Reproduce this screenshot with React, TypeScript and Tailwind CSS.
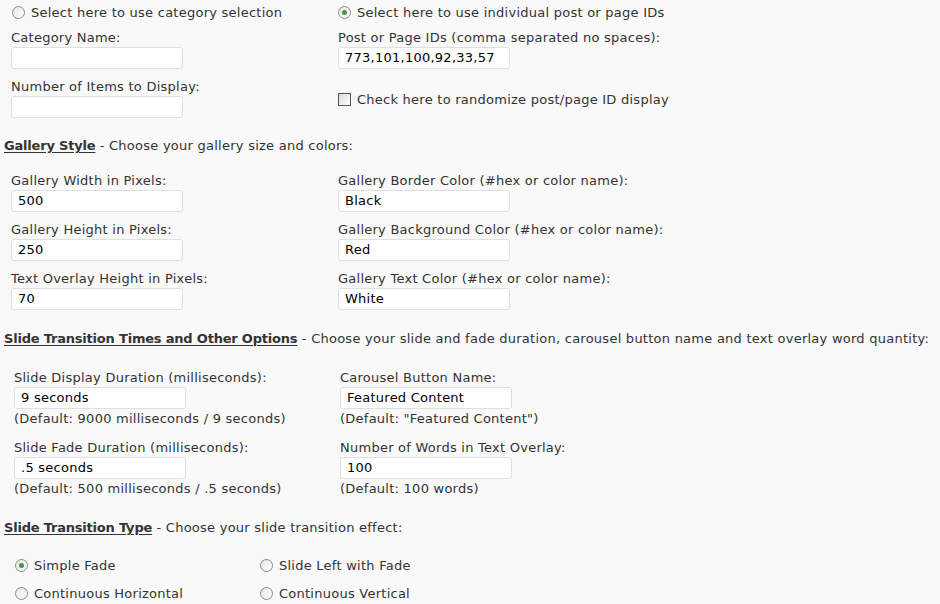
import React from "react";

const font = { fontFamily: '"DejaVu Sans", Verdana, sans-serif', letterSpacing: "0.25px" };

function Radio({ checked }: { checked?: boolean }) {
  return (
    <span className="inline-flex items-center justify-center w-[13px] h-[13px] rounded-full border border-[#8a8a8a] bg-gradient-to-br from-[#e6e6e6] to-[#ffffff] shrink-0">
      {checked && <span className="w-[5px] h-[5px] rounded-full bg-[#3c9a3c]" />}
    </span>
  );
}

function Checkbox() {
  return (
    <span className="inline-block w-[13px] h-[13px] border border-[#555] bg-gradient-to-br from-[#dcdcdc] to-[#ffffff] shrink-0" />
  );
}

function Input({ value }: { value?: string }) {
  return (
    <div className="w-[172px] h-[22px] bg-white border border-[#dfdfdf] rounded-[3px] px-[6px] leading-[20px] text-[#000]">
      {value}
    </div>
  );
}

function Field({ label, value, note }: { label: string; value?: string; note?: string }) {
  return (
    <div className="flex flex-col">
      <div className="h-[17px] leading-[17px] whitespace-nowrap">{label}</div>
      <div className="mt-[1px]">
        <Input value={value} />
      </div>
      {note && <div className="h-[20px] leading-[20px] whitespace-nowrap">{note}</div>}
    </div>
  );
}

function Heading({ title, desc }: { title: string; desc: string }) {
  return (
    <div className="h-[17px] leading-[17px] pl-[4px] whitespace-nowrap">
      <span className="font-bold underline underline-offset-[2px] tracking-[-0.2px]">{title}</span>
      <span> - {desc}</span>
    </div>
  );
}

export default function App() {
  return (
    <div
      className="w-[940px] h-[604px] overflow-hidden bg-[#f9f9f9] text-[#333] text-[13px]"
      style={font}
    >
      {/* Top section */}
      <div className="grid grid-cols-[327px_1fr] pl-[11px] pt-[4px]">
        <div className="flex flex-col">
          <div className="flex items-center gap-[6px] h-[17px] pl-[1px]">
            <Radio />
            <span>Select here to use category selection</span>
          </div>
          <div className="mt-[8px]">
            <Field label="Category Name:" />
          </div>
          <div className="mt-[9px]">
            <Field label="Number of Items to Display:" />
          </div>
        </div>
        <div className="flex flex-col">
          <div className="flex items-center gap-[6px] h-[17px]">
            <Radio checked />
            <span>Select here to use individual post or page IDs</span>
          </div>
          <div className="mt-[8px]">
            <Field label="Post or Page IDs (comma separated no spaces):" value="773,101,100,92,33,57" />
          </div>
          <div className="mt-[22px] flex items-center gap-[6px] h-[17px]">
            <Checkbox />
            <span>Check here to randomize post/page ID display</span>
          </div>
        </div>
      </div>

      <div className="mt-[19px]">
        <Heading title="Gallery Style" desc="Choose your gallery size and colors:" />
      </div>

      <div className="grid grid-cols-[327px_1fr] pl-[11px] mt-[18px]">
        <div className="flex flex-col gap-[9px]">
          <Field label="Gallery Width in Pixels:" value="500" />
          <Field label="Gallery Height in Pixels:" value="250" />
          <Field label="Text Overlay Height in Pixels:" value="70" />
        </div>
        <div className="flex flex-col gap-[9px]">
          <Field label="Gallery Border Color (#hex or color name):" value="Black" />
          <Field label="Gallery Background Color (#hex or color name):" value="Red" />
          <Field label="Gallery Text Color (#hex or color name):" value="White" />
        </div>
      </div>

      <div className="mt-[20px]">
        <Heading
          title="Slide Transition Times and Other Options"
          desc="Choose your slide and fade duration, carousel button name and text overlay word quantity:"
        />
      </div>

      <div className="grid grid-cols-[326px_1fr] pl-[14px] mt-[22px]">
        <div className="flex flex-col gap-[10px]">
          <Field
            label="Slide Display Duration (milliseconds):"
            value="9 seconds"
            note="(Default: 9000 milliseconds / 9 seconds)"
          />
          <Field
            label="Slide Fade Duration (milliseconds):"
            value=".5 seconds"
            note="(Default: 500 milliseconds / .5 seconds)"
          />
        </div>
        <div className="flex flex-col gap-[10px]">
          <Field label="Carousel Button Name:" value="Featured Content" note={'(Default: "Featured Content")'} />
          <Field label="Number of Words in Text Overlay:" value="100" note="(Default: 100 words)" />
        </div>
      </div>

      <div className="mt-[20px]">
        <Heading title="Slide Transition Type" desc="Choose your slide transition effect:" />
      </div>

      <div className="grid grid-cols-[245px_1fr] pl-[15px] mt-[21px] gap-y-[11px]">
        <div className="flex items-center gap-[6px] h-[17px]">
          <Radio checked />
          <span>Simple Fade</span>
        </div>
        <div className="flex items-center gap-[6px] h-[17px]">
          <Radio />
          <span>Slide Left with Fade</span>
        </div>
        <div className="flex items-center gap-[6px] h-[17px]">
          <Radio />
          <span>Continuous Horizontal</span>
        </div>
        <div className="flex items-center gap-[6px] h-[17px]">
          <Radio />
          <span>Continuous Vertical</span>
        </div>
      </div>
    </div>
  );
}
